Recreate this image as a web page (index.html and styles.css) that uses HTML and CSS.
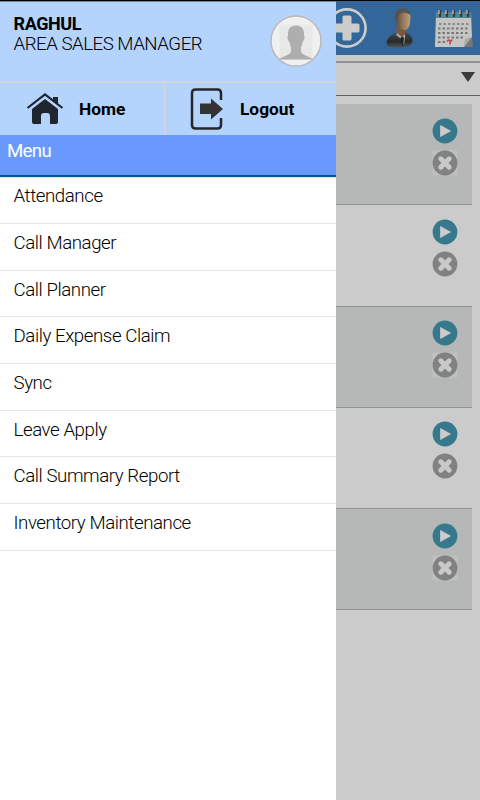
FILE: index.html
```html
<!DOCTYPE html>
<html lang="en">
<head>
<meta charset="utf-8">
<title>Menu</title>
<link rel="stylesheet" href="styles.css">
</head>
<body>
<svg width="0" height="0" class="defs">
  <defs>
    <symbol id="play" viewBox="0 0 26 26"><circle cx="13" cy="13" r="12.4" fill="#37798c"/><path d="M8.5 7.5v11l10-5.5z" fill="#ccc" stroke="#ccc" stroke-width=".7" stroke-linejoin="round"/></symbol>
    <symbol id="close" viewBox="0 0 26 26"><path d="M.5.5h25v25H.5z" fill="#ccc" fill-opacity=".4"/><circle cx="13" cy="13" r="12.4" fill="#818181"/><path d="M8.800 8.800l8.400 8.400M17.200 8.800l-8.400 8.400" stroke="#c9c9c9" stroke-width="5"  stroke-linecap="round"/></symbol>
  </defs>
</svg>
<div class="screen">
  <main class="page">
    <header class="toolbar">
      <svg class="add" width="40" height="40" viewBox="0 0 40 40"><circle cx="20" cy="20" r="18.600" fill="none" stroke="#ccc" stroke-width="2.600"/><path d="M15.500 9q0-1.500 1.500-1.500h6q1.500 0 1.500 1.500v6.500H31q1.500 0 1.500 1.500v6q0 1.500-1.500 1.500h-6.500V31q0 1.500-1.500 1.500h-6q-1.500 0-1.500-1.500v-6.500H9q-1.500 0-1.500-1.500v-6q0-1.500 1.500-1.500h6.500z" fill="#ccc"/></svg>
      <svg class="person" width="28" height="40" viewBox="0 0 28 40">
        <defs><linearGradient id="skin"><stop offset="0" stop-color="#59483b"/><stop offset=".5" stop-color="#94775a"/><stop offset="1" stop-color="#bea07b"/></linearGradient><linearGradient id="suit" x2="0" y2="1"><stop stop-color="#4a4d50"/><stop offset=".6" stop-color="#27292b"/><stop offset="1" stop-color="#55585b"/></linearGradient></defs>
        <path d="M.5 37c0-6 2-9 9-12l9-1c6 2 8 5 8 10l-3 4-8 1.500C9 40 3 39.500.5 37z" fill="url(#suit)"/>
        <path d="M11 17l8 4v7l-2 3-7-7z" fill="#76583f"/><path d="M11 25l5 4 3-3v3l-1 8-4-7-4-3z" fill="#aaa9a8"/><path d="M16 28l2 2-1 9-3-8z" fill="#222"/>
        <path d="M9.500 8c1-6 13-7 15 0L24 16c-1 4-3 6.500-6 6-4-1-7-4-8-8z" fill="url(#skin)"/>
        <path d="M10 14C7 6 10 0 17 .5c5 .3 7 3 7 6-4-2.500-9-2-11 0l-1 6z" fill="#555452"/>
      </svg>
      <svg class="calendar" width="40" height="41" viewBox="0 0 40 41">
        <path d="M2 4h35l1 25-8 10H1z" fill="#c5c6c4"/><path d="M2 4h35v6H2z" fill="#518798"/><path d="M38 29l1 10h-9z" fill="#777"/><path d="M30 39l1-8 7-2z" fill="#a8a8a6"/>
        <g stroke="#383b3d" stroke-width="2.400" stroke-linecap="round"><path d="M6 3v5M13 3v5M20 3v5M27 3v5M34 3v5"/></g>
        <g stroke="#c5c5c5" stroke-width="1.200"><path d="M5 2v4M12 2v4M19 2v4M26 2v4M33 2v4"/></g>
        <g fill="none" stroke="#77787a" stroke-width="2" stroke-dasharray="2.500 2"><path d="M5 16h31" stroke-width="1.300"/><path d="M4 20.500h31M4 25h31M4 29.500h27M4 34h7"/></g><path d="M13 33.500q2-3 3 0v3m2-5l-2 3" fill="none" stroke="#cf3b42" stroke-width="1.500"/>
      </svg>
    </header>
    <div class="select"><svg width="14" height="10" viewBox="0 0 14 10"><path d="M0 0h14L7 10z" fill="#3b3b3b"/></svg></div>
    <section class="cards">
      <article class="card shaded"><svg><use href="#play"/></svg><svg><use href="#close"/></svg></article>
      <article class="card"><svg><use href="#play"/></svg><svg><use href="#close"/></svg></article>
      <article class="card shaded"><svg><use href="#play"/></svg><svg><use href="#close"/></svg></article>
      <article class="card"><svg><use href="#play"/></svg><svg><use href="#close"/></svg></article>
      <article class="card shaded"><svg><use href="#play"/></svg><svg><use href="#close"/></svg></article>
    </section>
  </main>
  <aside class="drawer">
    <div class="profile">
      <div class="who"><div class="name">RAGHUL</div><div class="role">AREA SALES MANAGER</div></div>
      <svg width="52" height="52" viewBox="0 0 52 52"><circle cx="26" cy="26" r="25" fill="#f0f0f0"/><path d="M9.500 9.500h33v35h-33z" fill="#e8e8e8"/><path d="M26 10.500c-6 0-8.500 4-8 10-1 1-.5 5 1.500 6.500.5 3 1 4 1.500 5.500v4.500c-2 3.500-8 4-12 7.500h34c-4-3.500-10-4-12-7.500v-4.500c.5-1.500 1-2.500 1.500-5.500 2-1.500 2.500-5.500 1.500-6.500.5-6-2-10-8-10z" fill="#aeaeae"/><circle cx="26" cy="26" r="25" fill="none" stroke="#b9b9b9" stroke-width="1.500"/></svg>
    </div>
    <div class="actions">
      <div class="action home"><svg width="38" height="34" viewBox="0 0 38 34"><path d="M1.500 16L19 2.500l17.500 13.500" fill="none" stroke="#20262d" stroke-width="2.200"/><path d="M27 5h5v8l-5-4z" fill="#20262d"/><path d="M19 7L32 17v13q0 2-2 2h-6V24q0-3-3-3h-3q-3 0-3 3v8H8q-2 0-2-2V17z" fill="#20262d"/></svg><span>Home</span></div>
      <div class="action logout"><svg width="34" height="42" viewBox="0 0 34 42"><path d="M31 12V5q0-3.500-3.500-3.500h-22Q2 1.500 2 5v32q0 3.500 3.500 3.500h22Q31 40.500 31 37v-7" fill="none" stroke="#27272a" stroke-width="2.500"/><path d="M10 15.500h11v-5L33 21 21 31.500V26H10z" fill="#333"/></svg><span>Logout</span></div>
    </div>
    <div class="heading">Menu</div>
    <nav class="menu"><a>Attendance</a><a>Call Manager</a><a>Call Planner</a><a>Daily Expense Claim</a><a>Sync</a><a>Leave Apply</a><a>Call Summary Report</a><a>Inventory Maintenance</a></nav>
  </aside>
</div>
</body>
</html>
```

FILE: styles.css
```css
* { box-sizing: border-box; }
body { margin: 0; font-family: Roboto, sans-serif; color: #000; }
svg { display: block; flex: none; }
.defs { position: absolute; }
.screen { position: relative; width: 480px; height: 800px; overflow: hidden; background: #cbcbcb; border-top: 1px solid #000; }
.toolbar { display: flex; height: 54px; padding: 7px 6px 0 327px; background: #336699; }
.person { margin-left: 19px; }
.calendar { margin-left: auto; }
.select { display: flex; justify-content: flex-end; height: 35px; margin-top: 6px; padding: 9px 5px 0; border-top: 2px solid #929292; border-bottom: 1px solid #5e5e60; }
.cards { padding: 8px 8px 0; }
.card { display: flex; flex-direction: column; align-items: flex-end; gap: 6px; height: 101.25px; padding: 13.5px 14px 0; border-bottom: 1px solid #929494; }
.card svg { width: 26px; height: 26px; }
.shaded { background: #b6b8b7; }
.drawer { position: absolute; top: 0; left: 0; width: 336px; height: 799px; background: #fff; }
.profile { display: flex; justify-content: space-between; height: 82px; padding: 11px 14px 0 13.5px; background: #b4d3fd; border-top: 1px solid #7489a5; border-bottom: 2px solid #d0d6df; }
.profile svg { margin-top: 2px; }
.name, .role { line-height: 21px; white-space: nowrap; }
.name { font-size: 18px; font-weight: 700; letter-spacing: -.4px; }
.role { font-size: 18.67px; font-weight: 300; letter-spacing: -.48px; }
.actions { display: grid; grid-template-columns: 165px 171px; height: 52px; background: #b4d3fd; }
.action { display: flex; align-items: center; font-size: 17.33px; font-weight: 700; }
.home { padding-left: 26px; border-right: 1px solid #d5d7dc; }
.home span { margin-left: 15px; }
.logout { padding-left: 25px; }
.logout span { margin-left: 16px; }
.heading { height: 42px; padding: 5px 7px 0; background: #6999fd; color: #fff; border-bottom: 2px solid #00558d; font-size: 18.67px; line-height: 22px; letter-spacing: -.7px; }
.menu { border-top: 1px solid #e0e0e0; font-weight: 300; }
.menu a { display: block; height: 46.67px; padding: 8px 13.5px 0; border-bottom: 1px solid #e5e5e5; font-size: 18.67px; line-height: 22px; letter-spacing: -.42px; }
.menu a:first-child { height: 46px; padding-top: 7px; }
```
